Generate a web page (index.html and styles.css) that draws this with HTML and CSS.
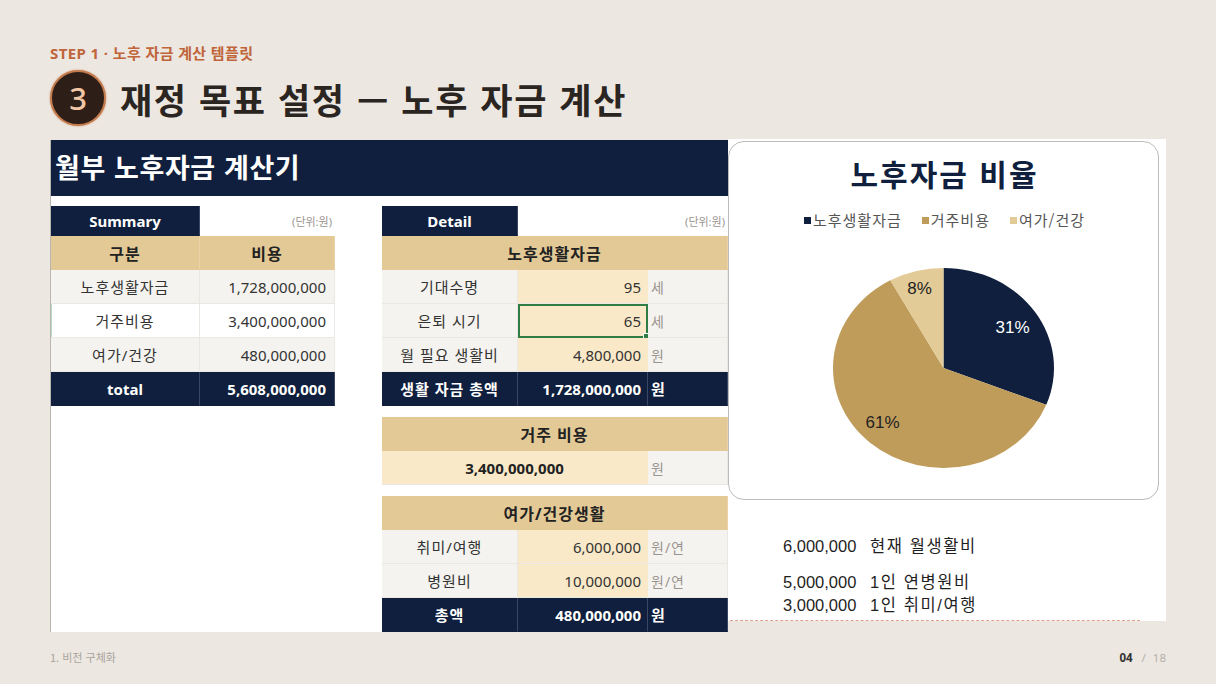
FILE: index.html
```html
<!DOCTYPE html>
<html lang="ko">
<head>
<meta charset="utf-8">
<title>재정 목표 설정 — 노후 자금 계산</title>
<link rel="stylesheet" href="styles.css">
</head>
<body>
<div class="slide">
  <div class="eyebrow">STEP 1 · 노후 자금 계산 템플릿</div>
  <div class="title-row">
    <div class="badge">3</div>
    <h1>재정 목표 설정 — 노후 자금 계산</h1>
  </div>

  <div class="sheet">
    <section class="calc">
      <div class="calc-head">월부 노후자금 계산기</div>
      <div class="calc-body">
        <div class="summary">
          <div class="cell navy bold">Summary</div>
          <div class="cell note">(단위:원)</div>
          <div class="cell tan bold ko">구분</div>
          <div class="cell tan bold ko">비용</div>
          <div class="cell grey ko">노후생활자금</div>
          <div class="cell grey num">1,728,000,000</div>
          <div class="cell white ko mark">거주비용</div>
          <div class="cell white num">3,400,000,000</div>
          <div class="cell grey ko">여가/건강</div>
          <div class="cell grey num">480,000,000</div>
          <div class="cell navy bold">total</div>
          <div class="cell navy bold num">5,608,000,000</div>
        </div>

        <div class="detail">
          <div class="dgrid">
            <div class="cell navy bold">Detail</div>
            <div class="cell note span2">(단위:원)</div>
            <div class="cell tan bold span3 ko">노후생활자금</div>
            <div class="cell grey ko">기대수명</div>
            <div class="cell cream num">95</div>
            <div class="cell grey unit">세</div>
            <div class="cell grey ko">은퇴 시기</div>
            <div class="cell cream num selected">65</div>
            <div class="cell grey unit">세</div>
            <div class="cell grey ko">월 필요 생활비</div>
            <div class="cell cream num">4,800,000</div>
            <div class="cell grey unit">원</div>
            <div class="cell navy bold ko">생활 자금 총액</div>
            <div class="cell navy bold num">1,728,000,000</div>
            <div class="cell navy bold unit">원</div>
          </div>

          <div class="dgrid">
            <div class="cell tan bold span3 ko">거주 비용</div>
            <div class="cell cream bold span2">3,400,000,000</div>
            <div class="cell grey unit">원</div>
          </div>

          <div class="dgrid">
            <div class="cell tan bold span3 ko">여가/건강생활</div>
            <div class="cell grey ko">취미/여행</div>
            <div class="cell cream num">6,000,000</div>
            <div class="cell grey unit">원/연</div>
            <div class="cell grey ko">병원비</div>
            <div class="cell cream num">10,000,000</div>
            <div class="cell grey unit">원/연</div>
            <div class="cell navy bold ko">총액</div>
            <div class="cell navy bold num">480,000,000</div>
            <div class="cell navy bold unit">원</div>
          </div>
        </div>
      </div>
    </section>

    <section class="chart-side">
      <div class="chart-card">
        <div class="chart-title">노후자금 비율</div>
        <div class="legend">
          <span class="lg"><i class="sq sq-navy"></i>노후생활자금</span>
          <span class="lg"><i class="sq sq-tan"></i>거주비용</span>
          <span class="lg"><i class="sq sq-light"></i>여가/건강</span>
        </div>
        <svg class="pie" width="221" height="200" viewBox="-110.5 -100 221 200">
          <path d="M0,0 L0,-100 A110.5,100 0 0,1 102.74,36.81 Z" fill="#0f1f3d"/>
          <path d="M0,0 L102.74,36.81 A110.5,100 0 1,1 -53.24,-87.63 Z" fill="#c09c5b"/>
          <path d="M0,0 L-53.24,-87.63 A110.5,100 0 0,1 0,-100 Z" fill="#e3cb97"/>
          <text x="69" y="-35" class="pl pl-w">31%</text>
          <text x="-61" y="60" class="pl">61%</text>
          <text x="-24" y="-74" class="pl">8%</text>
        </svg>
      </div>
      <div class="notes">
        <div class="note-row first"><span class="n">6,000,000</span><span class="k">현재 월생활비</span></div>
        <div class="note-row"><span class="n">5,000,000</span><span class="k">1인 연병원비</span></div>
        <div class="note-row tight"><span class="n">3,000,000</span><span class="k">1인 취미/여행</span></div>
      </div>
      <div class="dash"></div>
    </section>
  </div>

  <footer class="foot">
    <span class="section">1. 비전 구체화</span>
    <span class="pager"><b>04</b><span class="sep">/</span>18</span>
  </footer>
</div>
</body>
</html>
```

FILE: styles.css
```css
* { box-sizing: border-box; }

html, body {
  margin: 0;
  padding: 0;
  background: #ece7e1;
}

body {
  font-family: "Noto Sans", "Noto Sans CJK KR", sans-serif;
  color: #2b2522;
}

.slide {
  width: 1216px;
  height: 684px;
  padding: 43px 50px 0 50px;
  overflow: hidden;
}

.eyebrow {
  font-size: 15px;
  line-height: 20px;
  font-weight: 700;
  color: #c0643a;
  letter-spacing: 0.4px;
}

.title-row {
  display: flex;
  align-items: center;
  gap: 14px;
  margin-top: 7px;
  height: 56px;
}

.badge {
  width: 56px;
  height: 56px;
  border-radius: 50%;
  background: #2d1f18;
  border: 2px solid #c37a4c;
  box-shadow: 0 0 2px #d08a5a;
  color: #f2c7a6;
  font-family: "Noto Sans", sans-serif;
  font-size: 31px;
  font-weight: 500;
  display: flex;
  align-items: center;
  justify-content: center;
  line-height: 1;
}

h1 {
  margin: 0;
  font-family: "Noto Sans CJK KR", sans-serif;
  font-size: 35px;
  font-weight: 700;
  color: #2b2522;
  letter-spacing: 1.6px;
}

/* ---------- sheet ---------- */
.sheet {
  display: flex;
  align-items: flex-start;
  margin-top: 14px;
}

.calc {
  width: 678px;
  height: 492px;
  background: #fff;
  border-left: 1px solid #b9b5af;
}

.calc-head {
  height: 56px;
  background: #0f1f3d;
  color: #fff;
  font-family: "Noto Sans CJK KR", sans-serif;
  font-size: 27px;
  font-weight: 700;
  display: flex;
  align-items: center;
  padding-left: 4px;
  padding-bottom: 3px;
  letter-spacing: 0.6px;
}

.calc-body {
  display: flex;
  align-items: flex-start;
  gap: 47px;
  padding-top: 10px;
}

.summary {
  display: grid;
  grid-template-columns: 149px 135px;
  grid-template-rows: 30px repeat(5, 34px);
}

.detail {
  display: flex;
  flex-direction: column;
  gap: 11px;
  width: 346px;
}

.dgrid {
  display: grid;
  grid-template-columns: 136px 130px 80px;
  grid-auto-rows: 34px;
}
.dgrid:first-child {
  grid-template-rows: 30px;
}

.cell {
  display: flex;
  align-items: center;
  justify-content: center;
  font-family: "Noto Sans", "Noto Sans CJK KR", sans-serif;
  font-size: 15px;
  color: #333;
  white-space: nowrap;
  border-bottom: 1px solid #ebe8e3;
  border-right: 1px solid #ebe8e3;
  position: relative;
}

.ko { letter-spacing: 1px; }

.span2 { grid-column: span 2; }
.span3 { grid-column: span 3; }

.bold { font-weight: 700; color: #222; }

.navy {
  background: #0f1f3d;
  color: #fff;
  border-bottom-color: #0f1f3d;
  border-right-color: #3a4762;
}
.navy.bold { color: #fff; }

.tan {
  background: #e3c996;
  border-bottom-color: #e3c996;
  border-right-color: #e8d2a6;
  font-size: 16px;
}

.grey { background: #f5f3ef; }
.white { background: #fff; }
.cream { background: #f9e9c8; border-right-color: #f9e9c8; }

.num {
  justify-content: flex-end;
  padding-right: 6px;
}
.summary .num { padding-right: 8px; }

.unit {
  justify-content: flex-start;
  padding-left: 3px;
  color: #9a9590;
  font-size: 14px;
  letter-spacing: 1px;
}
.navy.unit { color: #fff; font-size: 15px; }

.note {
  background: #fff;
  justify-content: flex-end;
  padding-right: 2px;
  font-size: 11px;
  color: #9a9590;
  border-color: #fff;
}

.mark { box-shadow: inset 1px 0 0 #b9dcc2; }

.selected {
  outline: 2px solid #2f7d45;
  outline-offset: -2px;
}
.selected::after {
  content: "";
  position: absolute;
  right: -3px;
  bottom: -3px;
  width: 5px;
  height: 5px;
  background: #2f7d45;
  border: 1px solid #fff;
}

/* ---------- chart side ---------- */
.chart-side {
  width: 438px;
  height: 482px;
  background: #fff;
  display: flex;
  flex-direction: column;
  margin-top: -1px;
}

.chart-card {
  width: 431px;
  height: 359px;
  margin-top: 2px;
  border: 1.5px solid #bdbcba;
  border-radius: 16px;
  display: flex;
  flex-direction: column;
  align-items: center;
  background: #fff;
}

.chart-title {
  margin-top: 13px;
  font-family: "Noto Sans CJK KR", sans-serif;
  font-size: 30px;
  line-height: 36px;
  font-weight: 700;
  color: #0f1f3d;
  letter-spacing: 2px;
  padding-left: 2px;
}

.legend {
  margin-top: 19px;
  display: flex;
  gap: 20px;
  font-family: "Noto Sans CJK KR", sans-serif;
  font-size: 15px;
  line-height: 20px;
  color: #555;
  letter-spacing: 1px;
  padding-left: 2px;
}
.lg { display: inline-flex; align-items: center; gap: 2px; }
.sq { display: inline-block; width: 7px; height: 7px; }
.sq-navy { background: #0f1f3d; }
.sq-tan { background: #c09c5b; }
.sq-light { background: #e3cb97; }

.pie {
  margin-top: 38px;
  display: block;
}
.pl {
  font-family: "Liberation Sans", Arial, sans-serif;
  font-size: 17px;
  fill: #222;
  text-anchor: middle;
}
.pl-w { fill: #fff; }

.notes {
  flex: 1;
  padding-left: 55px;
  font-family: "Liberation Sans", "Noto Sans CJK KR", sans-serif;
  font-size: 16.5px;
  color: #1f1f1f;
}
.note-row {
  display: flex;
  gap: 13px;
  line-height: 22px;
  margin-top: 14px;
}
.note-row .k { letter-spacing: 1.6px; }
.note-row.first { margin-top: 35px; }
.note-row.tight { margin-top: 1px; }
.note-row .n { width: 74px; }

.dash {
  width: 410px;
  margin-left: 2px;
  border-top: 1px dashed #e2a08c;
  height: 0;
}

/* ---------- footer ---------- */
.foot {
  display: flex;
  justify-content: space-between;
  align-items: center;
  margin-top: 17px;
  height: 16px;
  font-size: 11px;
}
.section {
  color: #aaa49d;
  font-family: "Noto Sans CJK KR", sans-serif;
}
.pager {
  color: #b5b0aa;
  font-family: "Noto Sans", sans-serif;
  font-size: 11.5px;
}
.pager b { color: #333; font-weight: 700; }
.pager .sep { margin: 0 7px 0 9px; }
```
